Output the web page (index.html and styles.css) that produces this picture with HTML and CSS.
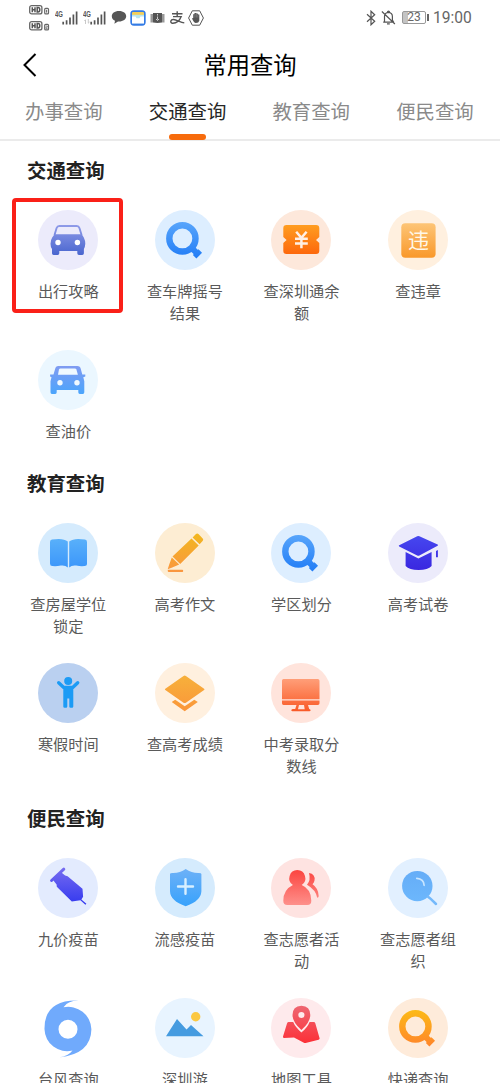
FILE: index.html
```html
<!DOCTYPE html>
<html lang="zh-CN">
<head>
<meta charset="utf-8">
<title>常用查询</title>
<link rel="stylesheet" href="styles.css">
</head>
<body>
<svg class="defs" width="0" height="0">
  <defs>
    <linearGradient id="indigo" gradientUnits="userSpaceOnUse" x1="0" y1="14" x2="0" y2="46"><stop offset="0" stop-color="#929de9"/><stop offset="1" stop-color="#4764ce"/></linearGradient>
    <linearGradient id="blue" gradientUnits="userSpaceOnUse" x1="0" y1="12" x2="0" y2="48"><stop offset="0" stop-color="#58a5fb"/><stop offset="1" stop-color="#227df6"/></linearGradient>
    <linearGradient id="ticket" gradientUnits="userSpaceOnUse" x1="0" y1="15" x2="0" y2="44"><stop offset="0" stop-color="#ff9d20"/><stop offset="1" stop-color="#fd680c"/></linearGradient>
    <linearGradient id="amber" gradientUnits="userSpaceOnUse" x1="0" y1="13" x2="0" y2="48"><stop offset="0" stop-color="#fdc577"/><stop offset="1" stop-color="#f9982a"/></linearGradient>
    <linearGradient id="sky" gradientUnits="userSpaceOnUse" x1="0" y1="15" x2="0" y2="44"><stop offset="0" stop-color="#829bf1"/><stop offset="1" stop-color="#4ba5fc"/></linearGradient>
    <linearGradient id="book" gradientUnits="userSpaceOnUse" x1="0" y1="16" x2="0" y2="45"><stop offset="0" stop-color="#59b0fa"/><stop offset="1" stop-color="#3b96fa"/></linearGradient>
    <linearGradient id="pencil" gradientUnits="userSpaceOnUse" x1="0" y1="11" x2="0" y2="49"><stop offset="0" stop-color="#f2b71f"/><stop offset="1" stop-color="#fa9640"/></linearGradient>
    <linearGradient id="violet" gradientUnits="userSpaceOnUse" x1="0" y1="13" x2="0" y2="47"><stop offset="0" stop-color="#4647ef"/><stop offset="1" stop-color="#3a27e0"/></linearGradient>
    <linearGradient id="layers" gradientUnits="userSpaceOnUse" x1="0" y1="12" x2="0" y2="48"><stop offset="0" stop-color="#f7b13b"/><stop offset="1" stop-color="#fa963a"/></linearGradient>
    <linearGradient id="screen" gradientUnits="userSpaceOnUse" x1="0" y1="16" x2="0" y2="48"><stop offset="0" stop-color="#ff9e78"/><stop offset="1" stop-color="#f95a27"/></linearGradient>
    <linearGradient id="syringe" gradientUnits="userSpaceOnUse" x1="0" y1="10" x2="0" y2="46"><stop offset="0" stop-color="#756bf0"/><stop offset="1" stop-color="#3439ef"/></linearGradient>
    <linearGradient id="shield" gradientUnits="userSpaceOnUse" x1="0" y1="11" x2="0" y2="48"><stop offset="0" stop-color="#6db1f7"/><stop offset="1" stop-color="#38a2fc"/></linearGradient>
    <linearGradient id="people" gradientUnits="userSpaceOnUse" x1="0" y1="12" x2="0" y2="47"><stop offset="0" stop-color="#fb4540"/><stop offset="1" stop-color="#fe908b"/></linearGradient>
    <linearGradient id="lens" gradientUnits="userSpaceOnUse" x1="0" y1="13" x2="0" y2="47"><stop offset="0" stop-color="#65adf7"/><stop offset="1" stop-color="#6db8fd"/></linearGradient>
    <linearGradient id="map" gradientUnits="userSpaceOnUse" x1="0" y1="8" x2="0" y2="45"><stop offset="0" stop-color="#ee6671"/><stop offset="1" stop-color="#fc3038"/></linearGradient>
    <linearGradient id="gold" gradientUnits="userSpaceOnUse" x1="0" y1="12" x2="0" y2="48"><stop offset="0" stop-color="#fcba17"/><stop offset="1" stop-color="#ff862b"/></linearGradient>
    <symbol id="search" viewBox="0 0 60 60">
      <circle cx="27.4" cy="28.4" r="13.1" fill="none" stroke-width="6.4"/>
      <path d="M36 37.400l6.500 6.300" fill="none" stroke-width="6"/><path d="M40.700 42.200l3.500 3.500" fill="none" stroke-width="8"/>
    </symbol>
    <symbol id="signal" viewBox="0 0 16 14">
      <path d="M1.2 13.5v-2.7M4.6 13.5V9.2M8 13.5V6.5M11.4 13.5V3.5M14.6 13.5V.5" stroke="#555" stroke-width="1.7"/>
    </symbol>
  </defs>
</svg>

<div class="phone">
  <header class="status">
    <div class="hd-stack">
      <svg width="21" height="10" viewBox="0 0 21 10"><rect x=".7" y=".7" width="12.2" height="8.2" rx="2" fill="none" stroke="#666" stroke-width="1.3"/><path d="M3.300 2.300v5M6 2.300v5M3.300 4.800H6M8.200 2.600v4.400h.8q1.800 0 1.800-2.200T9 2.600z" fill="none" stroke="#555" stroke-width="1.500"/><rect x="15.700" y="3.300" width="3.800" height="5.600" rx="1" fill="none" stroke="#666" stroke-width="1.200"/><path d="M17.600 4.800v2.800" stroke="#666"/></svg>
      <svg width="21" height="10" viewBox="0 0 21 10"><rect x=".7" y=".7" width="12.2" height="8.2" rx="2" fill="none" stroke="#666" stroke-width="1.3"/><path d="M3.300 2.300v5M6 2.300v5M3.300 4.800H6M8.200 2.600v4.400h.8q1.800 0 1.800-2.200T9 2.600z" fill="none" stroke="#555" stroke-width="1.500"/><rect x="15.700" y="3.300" width="3.800" height="5.600" rx="1" fill="none" stroke="#666" stroke-width="1.200"/><path d="M16.700 5h1.600v1.200h-1.400v1.300h1.600" fill="none" stroke="#666" stroke-width=".7"/></svg>
    </div>
    <div class="cell"><span class="net"><b>4G</b></span><svg width="16" height="14"><use href="#signal"/></svg></div>
    <div class="cell cell-two"><span class="net"><b>4G</b><svg class="updown" width="6" height="5" viewBox="0 0 6 5"><path d="M1.5 5V.8L.3 2M4.3 0v4.2L5.5 3" fill="none" stroke="#bbb" stroke-width=".8"/></svg></span><svg width="16" height="14"><use href="#signal"/></svg></div>
    <svg class="chat" width="16" height="15" viewBox="0 0 16 15"><path d="M8 1C3.500 1 .8 3.300.8 6.300c0 2 1.200 3.600 3.200 4.500l-.6 2.900 3.600-2.200c5 .3 8.200-2 8.200-5.200C15.200 3.300 12.500 1 8 1z" fill="#565656"/></svg>
    <svg class="wallet" width="16" height="16" viewBox="0 0 16 16"><rect x=".3" y=".3" width="15.400" height="15.400" rx="3.600" fill="#347be5"/><rect x="2" y="2" width="12" height="5" rx="1" fill="#f5cf58"/><path d="M2 4.800h12v8.400H2z" fill="#b9e6ef"/><path d="M2 6.500h3.500l1 1.800h3l1-1.800H14v7H2z" fill="#fff"/></svg>
    <svg class="reader" width="15" height="12" viewBox="0 0 15 12"><path d="M.5 2H3v8.500H.5zM12 2h2.500v8.500H12z" fill="#999"/><path d="M3 1h9v9.500l-4.500.5L3 10.500z" fill="#555"/><path d="M7.500 2v1.500M7.500 4.500v3M6 7l1.500 1.500L9 7" fill="none" stroke="#ddd" stroke-width=".9"/></svg>
    <svg class="pay" width="15" height="14" viewBox="0 0 15 14"><path d="M2 2.700h10.500M7.200.3v5M3 5.600h8.200C9.500 10 6 12.500 2.300 12.300-.3 11.500.7 8.300 3.500 8.500c3.300.2 6.500 2.700 10.800 3.400" fill="none" stroke="#555" stroke-width="1.400"/></svg>
    <svg class="block" width="16" height="16" viewBox="0 0 16 16"><path d="M4.300.8h7.400L15.400 8l-3.700 7.200H4.300L.6 8z" fill="none" stroke="#555" stroke-width="1"/><path d="M4 8.300l1.200-.3V4.500l1.300-1 .5-.6h1l.6.700h1l.5.900h1.200v6.200q-.5 2.400-3.400 2.400-2.200 0-3.900-4.800z" fill="#555"/><path d="M6.900 4v3.500M8.400 4v3.500M9.900 4.500v3" stroke="#aaa" stroke-width=".4"/></svg>
    <svg class="bluetooth" width="10" height="16" viewBox="0 0 10 16"><path d="M1 4.200l7.700 7L5 14.800V1.200l3.700 3.600L1 11.800" fill="none" stroke="#555" stroke-width="1.200"/></svg>
    <svg class="bell" width="15" height="16" viewBox="0 0 15 16"><path d="M2.200 12.200h10.500M3.500 12V6.500q0-3.700 3.900-4.100 4 .4 4 4.100V10l1.300 2.200M6 13.900h2.800M6.500 2.300q0-1.300 1-1.300t1 1.300M.9 1.500l13 12.500" fill="none" stroke="#555" stroke-width="1.200"/></svg>
    <div class="battery"><span>23</span></div>
    <time class="clock">19:00</time>
  </header>

  <nav class="titlebar">
    <svg class="back" width="14" height="24" viewBox="0 0 14 24"><path d="M12.500 1L1.500 12l11 11" fill="none" stroke="#000" stroke-width="2"/></svg>
    <h1>常用查询</h1>
  </nav>

  <div class="tabs">
    <a class="tab">办事查询</a><a class="tab active">交通查询</a><a class="tab">教育查询</a><a class="tab">便民查询</a>
  </div>

  <section>
    <h2>交通查询</h2>
    <div class="grid">
      <div class="item selected"><svg class="icon lavender" viewBox="0 0 60 60"><path d="M16.500 25l2.100-7q.8-2 2.700-2h17.500q2 0 2.600 2l2.200 7" fill="none" stroke="url(#indigo)" stroke-width="1.900"/><path d="M16.500 24.300h27.300l2 3.200q1.500 3 1.500 6.300-.2 3.200-1.400 5.200v4.300q0 1.700-1.700 1.700h-3.200q-1.700 0-1.700-1.700V41h-18v2.300q0 1.700-1.700 1.700h-4q-1.600 0-1.600-1.700V39q-1.500-2-1.500-5.200.1-3.700 1.700-6.300z" fill="url(#indigo)"/><circle cx="20" cy="32.500" r="2.700" fill="#fff"/><circle cx="39.400" cy="32.500" r="2.700" fill="#fff"/></svg><p>出行攻略</p></div>
      <div class="item"><svg class="icon paleblue" viewBox="0 0 60 60"><use href="#search" stroke="url(#blue)"/></svg><p>查车牌摇号结果</p></div>
      <div class="item"><svg class="icon peach" viewBox="0 0 60 60"><path d="M15.500 15h29.600q3.200 0 3.200 3.200V27l-3.300 3 3.300 3v7.800q0 3.200-3.200 3.200H15.500q-3.200 0-3.200-3.200V33l3.300-3-3.300-3v-8.800q0-3.200 3.200-3.200z" fill="url(#ticket)"/><path d="M25.200 21.700l5.200 6.200 5.200-6.200M30.400 27.500v10.700M24 28.800h12.800M24 33.500h12.800" fill="none" stroke="#fff0e5" stroke-width="2.500"/></svg><p>查深圳通余额</p></div>
      <div class="item"><svg class="icon cream" viewBox="0 0 60 60"><rect x="13.300" y="13.300" width="34.300" height="34.400" rx="4" fill="url(#amber)"/><text class="glyph" x="30.400" y="38.200" text-anchor="middle">违</text></svg><p>查违章</p></div>
      <div class="item"><svg class="icon ice" viewBox="0 0 60 60"><path d="M20.300 16h19q3 0 3.500 3l1.500 5.500h3v2l-2 .8 1 4v11q0 1.700-1.500 1.700h-3q-1.500 0-1.500-1.700V40H18.700v2.300q0 1.700-1.500 1.700h-3.300q-1.400 0-1.400-1.700v-11l1-4-1.400-.8v-2h3.400l1.600-5.500q.6-3 3.200-3z" fill="url(#sky)"/><path d="M21 19.500q.3-1 1.400-1h14.400q1.200 0 1.600 1l1.500 5.300H20z" fill="#f0f9ff"/><circle cx="22" cy="32.800" r="2.700" fill="#f0f9ff"/><circle cx="39" cy="32.800" r="2.700" fill="#f0f9ff"/></svg><p>查油价</p></div>
    </div>
  </section>

  <section>
    <h2>教育查询</h2>
    <div class="grid">
      <div class="item"><svg class="icon lightsky" viewBox="0 0 60 60"><path d="M29.800 18.500v26q-2.500-2.600-7-2-4.500 1-8.500.5-2.300 0-2.300-2.500V19q0-2 2-2.400 11-2 15.800 1.900zM31.200 18.500v26q2.500-2.600 7-2 4.500 1 8.300.5 2.500 0 2.500-2.500V19q0-2-2-2.400-11-2-15.800 1.900z" fill="url(#book)"/></svg><p>查房屋学位锁定</p></div>
      <div class="item"><svg class="icon vanilla" viewBox="0 0 60 60"><path d="M40.700 11.300q1.500-1.500 3 0l4 4.200q1.200 1.300-.1 2.600l-3 3.100-7-6.700zM36.500 15.400l7.200 7-18.500 18.500-7.700-7.500zM16.800 34.600l7.400 7-7 3-4.500 1.700 1.600-5zM13.500 46.700h13.700q1.100 0 1 1.200t-1 1H13.500q-.8 0-.8-1.100t.8-1.100z" fill="url(#pencil)"/></svg><p>高考作文</p></div>
      <div class="item"><svg class="icon paleblue" viewBox="0 0 60 60"><use href="#search" stroke="url(#blue)"/></svg><p>学区划分</p></div>
      <div class="item"><svg class="icon lavender" viewBox="0 0 60 60"><path d="M17.600 29l12.800 6.500 13.200-6.500v14q-3.600 4-13 4t-13-4zM11.200 22.300l18-9q1.100-.5 2.200 0l18.200 8.300q1 .6 0 1.200L31.400 32.500q-1 .6-2.200 0l-18-9q-1-.7 0-1.200zM48 28l1.900-1v7.300H48z" fill="url(#violet)"/></svg><p>高考试卷</p></div>
      <div class="item"><svg class="icon steel" viewBox="0 0 60 60"><circle cx="30.200" cy="18.100" r="4" fill="#1c9bf5"/><path d="M20.700 19.700l5 4.700h9l5-4.700" fill="none" stroke="#1c9bf5" stroke-width="3.400" stroke-linecap="round" stroke-linejoin="round"/><path d="M25.300 23h10v20.500q0 1.200-1.200 1.200h-1.600q-1.200 0-1.200-1.200V35.500h-2v8q0 1.200-1.200 1.200h-1.600q-1.200 0-1.200-1.200z" fill="#1c9bf5"/></svg><p>寒假时间</p></div>
      <div class="item"><svg class="icon cream" viewBox="0 0 60 60"><path d="M10.300 25.700L28.500 13q1.200-.8 2.400 0l18.200 12.700q.9.700 0 1.300L30.900 39.700q-1.200.8-2.400 0L10.300 27q-.9-.7 0-1.300zM16.700 39l3.500-2.300 9.500 6.600 9.600-6.600 3.500 2.300-13.100 9.300z" fill="url(#layers)"/></svg><p>查高考成绩</p></div>
      <div class="item"><svg class="icon rose" viewBox="0 0 60 60"><path d="M12.500 16h34.300q1.700 0 1.700 1.700v18.500H11V17.700q0-1.700 1.500-1.700zM11 37.500h37.500v2.700q0 1.700-1.700 1.700H37l1.200 4q1.400.2 1.400 1.300 0 1-1.200 1H21.500q-1.200 0-1.200-1t1.400-1.300h2.500l1.300-4h-13q-1.500 0-1.500-1.700zM28 42l-1 4.200h6.700L33 42z" fill="url(#screen)"/></svg><p>中考录取分数线</p></div>
    </div>
  </section>

  <section>
    <h2>便民查询</h2>
    <div class="grid">
      <div class="item"><svg class="icon haze" viewBox="0 0 60 60"><path d="M13.600 22.500L25.800 11.200" stroke="url(#syringe)" stroke-width="3" stroke-linecap="round"/><path d="M17 19.500l5.800-5.500 4.300 3.500 2.500.7 14.900 12.600.6 8-1.700 2.700 5 4.200-1 1-5-4.400-8.600 1.100-15-14.700-.2-2.300-3.200-4z" fill="url(#syringe)"/></svg><p>九价疫苗</p></div>
      <div class="item"><svg class="icon lightsky" viewBox="0 0 60 60"><path d="M30.700 11q6 4.200 13.200 4 2.500 0 2.500 1v17.300Q46 43 30.700 48.300 15.300 43 15 33.300V16q0-1 2.500-1 7.500.2 13.200-4z" fill="url(#shield)"/><path d="M30.500 21.300v14.400M23 28.500h15" stroke="#d8efff" stroke-width="2.400" stroke-linecap="round"/></svg><p>流感疫苗</p></div>
      <div class="item"><svg class="icon blush" viewBox="0 0 60 60"><path d="M26.300 12a8.200 8.200 0 0 1 4.400 15q9.600 4 9.600 15.700 0 4.300-4 4.300h-20q-4 0-4-4.300 0-11 9.600-15.700a8.200 8.200 0 0 1 4.400-15zM38 15q6.500 1 5.500 7.500-.3 2-2 3.700 6 4 6.200 11.800 0 1.400-1.500 1.800-1.300-8-10.200-13.100 4-4.500 2-11.700z" fill="url(#people)"/></svg><p>查志愿者活动</p></div>
      <div class="item"><svg class="icon mist" viewBox="0 0 60 60"><circle cx="29.300" cy="28.100" r="15.200" fill="url(#lens)"/><path d="M40 38.700l2.200 1.700L48 46" fill="none" stroke="#74b9fb" stroke-width="2.500" stroke-linecap="round"/><path d="M28.800 20.300q7 .4 7.300 7" fill="none" stroke="#c8e5ff" stroke-width="1.700" stroke-linecap="round"/></svg><p>查志愿者组织</p></div>
      <div class="item"><svg class="icon plain" viewBox="0 0 60 60"><path d="M40.500 2.500Q29 3 25.500 9.200A23.300 23.300 0 0 1 53.400 31.300Q53 56 21 59.600q9.500-1.500 13.500-7.100A22.500 22.500 0 0 1 6.500 31.300Q6 1.500 40.500 2.500zM30 21.800a9.500 9.500 0 1 0 0 19 9.500 9.500 0 1 0 0-19z" fill="#70aafc" fill-rule="evenodd"/></svg><p>台风查询</p></div>
      <div class="item"><svg class="icon frost" viewBox="0 0 60 60"><path d="M11 38.300L22 21l9.500 10.500L36 27l12.500 11.300z" fill="#459be0"/><circle cx="40.700" cy="18.700" r="4.700" fill="#fbc843"/></svg><p>深圳游</p></div>
      <div class="item"><svg class="icon pink" viewBox="0 0 60 60"><path d="M17.700 24h4.500q2 5 8.200 10.500Q36.500 29.500 38.600 24h4q1.400 0 1.700 1.300l4.300 15q.3 1-1 1.400l-13 3.300q-1 .2-1.700-.3L23 39.400l-10 .5q-1.400 0-1-1.300l4-13.200q.5-1.400 1.700-1.400z" fill="url(#map)"/><path d="M30.400 7.700q8.900.4 8.900 9.300 0 7.200-8.900 15-8.900-7.800-8.900-15 0-8.900 8.900-9.300zM30.400 13.900a3.100 3.100 0 1 0 0 6.200 3.100 3.100 0 1 0 0-6.200z" fill="url(#map)" fill-rule="evenodd"/></svg><p>地图工具</p></div>
      <div class="item"><svg class="icon apricot" viewBox="0 0 60 60"><use href="#search" stroke="url(#gold)"/></svg><p>快递查询</p></div>
    </div>
  </section>
</div>
</body>
</html>
```
FILE: styles.css
```css
*, *::before, *::after { box-sizing: border-box; }

body {
  margin: 0;
  background: #fff;
  font-family: "Noto Sans CJK SC", sans-serif;
  overflow: hidden;
}

.defs { position: absolute; }

.phone {
  width: 500px;
  height: 1083px;
  overflow: hidden;
}

/* status bar */
.status {
  display: flex;
  align-items: center;
  height: 35px;
  padding-left: 29px;
  color: #555;
}
.status svg { flex: none; display: block; }
.hd-stack { display: flex; flex-direction: column; gap: 6px; margin-right: 5px; }
.cell { display: flex; align-items: center; width: 24px; margin-right: 4px; }
.cell svg { margin-left: -1px; }
.net {
  width: 8px;
  height: 15px;
  flex: none;
  font: bold 8.5px/8px "Liberation Sans", sans-serif;
}
.net b {
  display: block;
  width: 12px;
  transform: scaleX(.7);
  transform-origin: 0 0;
}
.net .updown { margin: 1px 0 0 1px; }
.cell-two { margin-right: 4px; }
.wallet { margin-left: 3px; }
.reader { margin-left: 4px; }
.pay { margin-left: 5px; }
.block { margin-left: 3px; }
.bluetooth { margin-left: 162px; }
.bell { margin-left: 5px; }
.battery {
  position: relative;
  width: 24px;
  height: 13px;
  margin-left: 6px;
  border: 1px solid #999;
  border-radius: 2px;
  background: linear-gradient(90deg, #c4c4c4 24%, #fff 24%);
  font: 12px/11px Roboto, sans-serif;
  color: #666;
  text-align: center;
}
.battery::after {
  content: "";
  position: absolute;
  right: -4px;
  top: 2px;
  width: 2px;
  height: 7px;
  background: #666;
}
.clock { margin-left: 7px; font: 15.6px/20px Roboto, sans-serif; color: #666; }

/* title */
.titlebar {
  display: grid;
  grid-template-columns: 58px 1fr 58px;
  align-items: center;
  height: 60px;
}
.back { margin-left: 23px; }
h1 {
  margin: 0;
  padding-bottom: 2px;
  text-align: center;
  font-size: 23.3px;
  line-height: 34px;
  font-weight: 400;
  color: #000;
}

/* tabs */
.tabs {
  display: grid;
  grid-template-columns: repeat(4, 123.7px);
  height: 46px;
  padding-left: 2px;
  border-bottom: 2px solid #ebebeb;
}
.tab {
  position: relative;
  text-align: center;
  font-size: 19.4px;
  line-height: 31px;
  font-weight: 400;
  color: #8a8a8a;
}
.active { color: #262626; }
.active::after {
  content: "";
  position: absolute;
  left: 50%;
  bottom: -.5px;
  width: 37px;
  height: 6px;
  margin-left: -18.5px;
  border-radius: 3px;
  background: #f76b0c;
}

/* sections */
section { padding: 14px 0 12px 10px; }
section + section { padding-top: 15px; }
h2 {
  margin: 0 0 25px 17px;
  font-size: 19.4px;
  line-height: 30px;
  font-weight: 700;
  color: #222;
}
.grid {
  display: grid;
  grid-template-columns: repeat(4, 116.6px);
  row-gap: 27px;
}
.item {
  position: relative;
  display: flex;
  flex-direction: column;
  align-items: center;
  gap: 9px;
}
.item p {
  width: 78px;
  margin: 0;
  text-align: center;
  font-size: 15.2px;
  line-height: 22px;
  font-weight: 400;
  color: #5a5a5a;
}
.selected::before {
  content: "";
  position: absolute;
  left: 2px;
  top: -12px;
  width: 111px;
  height: 115px;
  border: 4px solid #fa2018;
  border-radius: 4px;
}
.icon { width: 60px; height: 60px; border-radius: 50%; display: block; }
.glyph { font-size: 21px; fill: #fff7e8; }

.plain { border-radius: 0; }
.lavender { background: #ecebfb; }
.paleblue { background: #ddeeff; }
.peach { background: #fde8db; }
.cream { background: #fff0df; }
.ice { background: #ebf7ff; }
.lightsky { background: #d5ebfd; }
.vanilla { background: #fdedd3; }
.steel { background: #bad0f0; }
.rose { background: #ffe4dc; }
.haze { background: #e3ebfe; }
.blush { background: #fee3e1; }
.mist { background: #e2f0ff; }
.frost { background: #e8f4ff; }
.pink { background: #feeaec; }
.apricot { background: #feebda; }
```
